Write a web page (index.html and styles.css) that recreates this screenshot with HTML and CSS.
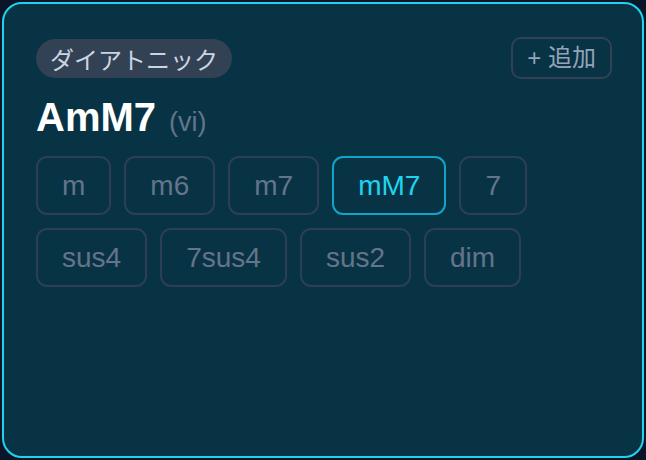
FILE: index.html
```html
<!DOCTYPE html>
<html lang="ja">
<head>
<meta charset="utf-8">
<link rel="stylesheet" href="styles.css">
</head>
<body>
<div class="card">
  <div class="header">
    <span class="badge">ダイアトニック</span>
    <button class="add">+ 追加</button>
  </div>
  <div class="title">
    <span class="chord">AmM7</span>
    <span class="degree">(vi)</span>
  </div>
  <div class="chips">
    <span class="chip">m</span>
    <span class="chip">m6</span>
    <span class="chip">m7</span>
    <span class="chip active">mM7</span>
    <span class="chip">7</span>
    <span class="chip">sus4</span>
    <span class="chip">7sus4</span>
    <span class="chip">sus2</span>
    <span class="chip">dim</span>
  </div>
</div>
</body>
</html>
```
FILE: styles.css
```css
html, body {
  margin: 0;
  padding: 0;
  background: #0a1628;
}
body {
  font-family: "Liberation Sans", "Noto Sans CJK JP", sans-serif;
  width: 646px;
  height: 460px;
  overflow: hidden;
}
.card {
  box-sizing: border-box;
  margin: 2px;
  width: 642px;
  height: 456px;
  background: #083344;
  border: 2px solid #22d3ee;
  border-radius: 20px;
  padding: 33px 30px 32px 32px;
}
.header {
  display: flex;
  justify-content: space-between;
  align-items: center;
  height: 42px;
}
.badge {
  background: #334155;
  color: #cbd5e1;
  font-family: "Noto Sans CJK JP", sans-serif;
  font-size: 24px;
  line-height: 31px;
  padding: 4px 14px;
  border-radius: 999px;
}
.add {
  background: transparent;
  border: 2px solid #334155;
  color: #94a3b8;
  font-family: "Liberation Sans", "Noto Sans CJK JP", sans-serif;
  font-size: 24px;
  line-height: 32px;
  padding: 3px 14px;
  border-radius: 10px;
  margin: 0;
}
.title {
  margin-top: 10px;
  height: 56px;
  display: flex;
  align-items: baseline;
  line-height: 56px;
}
.chord {
  color: #ffffff;
  font-weight: 700;
  font-size: 40px;
}
.degree {
  color: #64748b;
  font-size: 27px;
  margin-left: 13px;
}
.chips {
  margin-top: 11px;
  display: flex;
  flex-wrap: wrap;
  gap: 13px;
  width: 500px;
}
.chip {
  border: 2px solid #2b3f55;
  border-radius: 11px;
  color: #64748b;
  font-size: 28px;
  line-height: 31px;
  padding: 12px 24px;
}
.chip.active {
  border-color: #0ea5c9;
  color: #22d3ee;
}
```
